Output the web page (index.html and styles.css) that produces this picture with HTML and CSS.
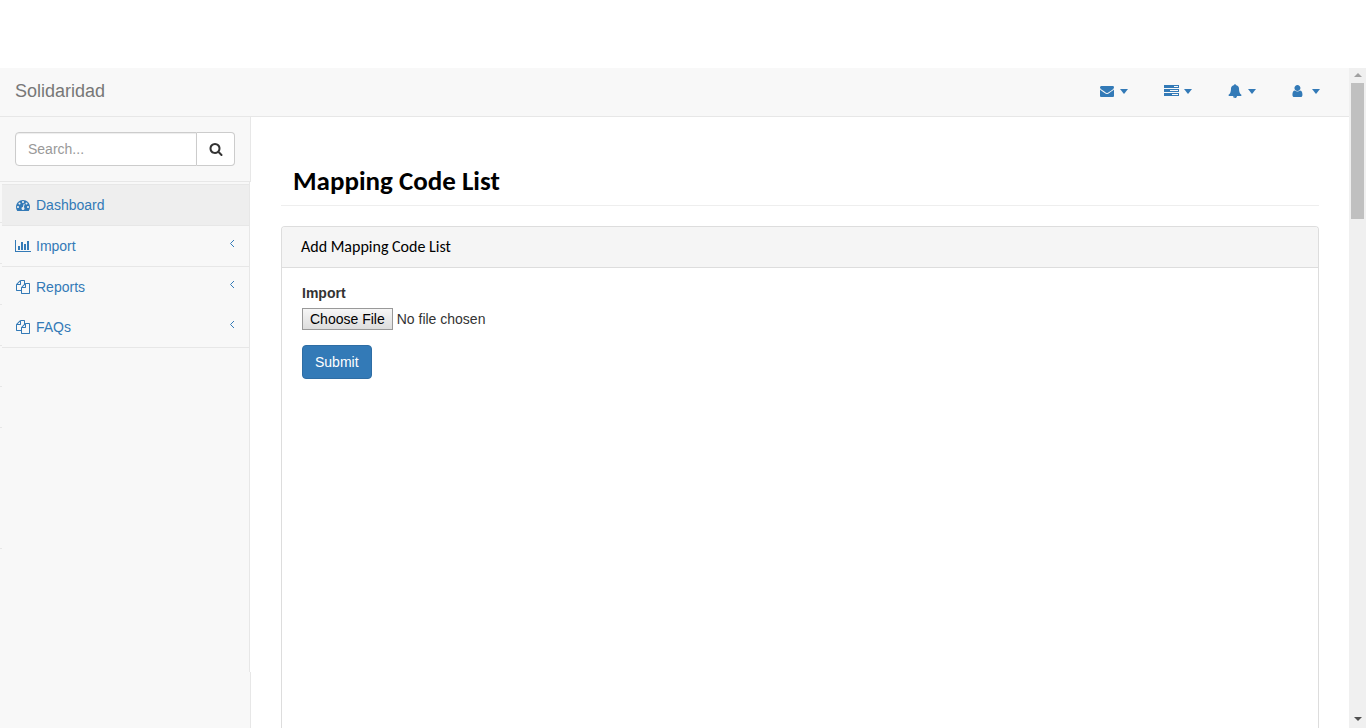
FILE: index.html
```html
<!DOCTYPE html>
<html lang="en">
<head>
<meta charset="utf-8">
<meta name="viewport" content="width=device-width, initial-scale=1">
<title>Solidaridad</title>
<link rel="stylesheet" href="styles.css">
</head>
<body>
<div class="frame">
  <div class="app">
    <header class="navbar">
      <a class="brand" href="#">Solidaridad</a>
      <nav class="top-links" aria-label="Account">
        <a href="#" aria-label="Messages"><svg class="icon" viewBox="0 0 1792 1792"><path d="M1792 710v794q0 66-47 113t-113 47h-1472q-66 0-113-47t-47-113v-794q44 49 101 87 362 246 497 345 57 42 92.500 65.500t94.500 48 110 24.500h2q51 0 110-24.500t94.500-48 92.500-65.500q170-123 498-345 57-39 100-87zm0-294q0 79-49 151t-122 123q-376 261-468 325-10 7-42.500 31t-54 38.500-52 32.500-57.500 27-50 9h-2q-23 0-50-9t-57.500-27-52-32.500-54-38.500-42.500-31q-91-64-262-182.500t-205-142.500q-62-42-117-115.500t-55-136.500q0-78 41.500-130t118.500-52h1472q65 0 112.500 47t47.500 113z"/></svg><span class="caret"></span></a>
        <a href="#" aria-label="Tasks"><svg class="icon icon-wide" viewBox="0 0 15 14"><path fill-rule="evenodd" d="M0 1h15v3H0zM10 2v1h4V2zM0 5h15v3H0zM6 6v1h8V6zM0 9h15v3H0zM8 10v1h6v-1z"/></svg><span class="caret"></span></a>
        <a href="#" aria-label="Alerts"><svg class="icon" viewBox="0 0 1792 1792"><path d="M912 1696q0-16-16-16-59 0-101.500-42.500t-42.500-101.500q0-16-16-16t-16 16q0 73 51.500 124.500t124.500 51.500q16 0 16-16zm816-288q0 52-38 90t-90 38h-448q0 106-75 181t-181 75-181-75-75-181h-448q-52 0-90-38t-38-90q50-42 91-88t85-119.500 74.500-158.500 50-206 19.500-260q0-152 117-282.500t307-158.500q-8-19-8-39 0-40 28-68t68-28 68 28 28 68q0 20-8 39 190 28 307 158.500t117 282.500q0 139 19.500 260t50 206 74.500 158.500 85 119.500 91 88z"/></svg><span class="caret"></span></a>
        <a href="#" aria-label="User"><svg class="icon" viewBox="200 0 1792 1792"><path d="M1536 1399q0 109-62.500 187t-150.500 78h-854q-88 0-150.500-78t-62.500-187q0-85 8.500-160.500t31.500-152 58.500-131 94-89 134.500-34.500q131 128 313 128t313-128q76 0 134.500 34.500t94 89 58.500 131 31.500 152 8.500 160.500zm-256-887q0 159-112.500 271.500t-271.500 112.500-271.500-112.500-112.500-271.500 112.500-271.500 271.500-112.500 271.500 112.500 112.500 271.500z"/></svg><span class="caret"></span></a>
      </nav>
    </header>
    <div class="columns">
      <aside class="sidebar">
        <form class="search" role="search">
          <input type="text" placeholder="Search..." aria-label="Search">
          <button type="button" aria-label="Search"><svg class="icon" viewBox="0 0 1792 1792"><path d="M1216 832q0-185-131.500-316.500t-316.500-131.500-316.500 131.500-131.500 316.500 131.500 316.500 316.500 131.500 316.500-131.500 131.500-316.500zm512 832q0 52-38 90t-90 38q-54 0-90-38l-343-342q-179 124-399 124-143 0-273.500-55.500t-225-150-150-225-55.500-273.500 55.500-273.500 150-225 225-150 273.500-55.500 273.500 55.500 225 150 150 225 55.500 273.500q0 220-124 399l343 343q37 37 37 90z"/></svg></button>
        </form>
        <nav class="menu" aria-label="Main">
          <a class="active" href="#"><svg class="icon menu-icon" viewBox="0 0 1792 1792"><path d="M384 1152q0-53-37.500-90.500t-90.500-37.500-90.500 37.500-37.500 90.500 37.500 90.500 90.500 37.500 90.500-37.500 37.500-90.500zm192-448q0-53-37.500-90.500t-90.500-37.500-90.500 37.500-37.500 90.500 37.500 90.500 90.500 37.500 90.500-37.500 37.500-90.500zm428 481l101-382q6-26-7.500-48.500t-38.500-29.500-48 6.500-30 39.500l-101 382q-60 5-107 43.500t-63 98.500q-20 77 20 146t117 89 146-20 89-117q16-60-6-117t-72-91zm660-33q0-53-37.500-90.500t-90.500-37.500-90.500 37.500-37.500 90.500 37.500 90.500 90.500 37.500 90.500-37.500 37.500-90.500zm-640-640q0-53-37.500-90.500t-90.500-37.500-90.500 37.500-37.500 90.500 37.500 90.500 90.500 37.500 90.500-37.500 37.500-90.500zm448 192q0-53-37.500-90.500t-90.500-37.500-90.500 37.500-37.500 90.500 37.500 90.500 90.500 37.500 90.500-37.500 37.500-90.500zm320 448q0 261-141 483-19 29-54 29h-1402q-35 0-54-29-141-221-141-483 0-182 71-348t191-286 286-191 348-71 348 71 286 191 191 286 71 348z"/></svg><span>Dashboard</span></a>
          <a href="#"><svg class="icon menu-icon icon-chart" viewBox="0 0 16 14"><path d="M0 1h1v11h15v1H0zM3 7h2v4H3zM6 3h2v8H6zM9 5h2v6H9zM12 2h2v9h-2z"/></svg><span>Import</span><svg class="angle" viewBox="0 0 6 9"><path d="M5 1L1.500 4.500L5 8"/></svg></a>
          <a class="joined" href="#"><svg class="icon menu-icon" viewBox="0 0 1792 1792"><path d="M1696 384q40 0 68 28t28 68v1216q0 40-28 68t-68 28h-960q-40 0-68-28t-28-68v-288h-544q-40 0-68-28t-28-68v-672q0-40 20-88t48-76l408-408q28-28 76-48t88-20h416q40 0 68 28t28 68v328q68-40 128-40h416zm-544 213l-299 299h299v-299zm-640-384l-299 299h299v-299zm196 647l316-316v-416h-384v416q0 40-28 68t-68 28h-416v640h512v-256q0-40 20-88t48-76zm956 804v-1152h-384v416q0 40-28 68t-68 28h-416v640h896z"/></svg><span>Reports</span><svg class="angle" viewBox="0 0 6 9"><path d="M5 1L1.500 4.500L5 8"/></svg></a>
          <a href="#"><svg class="icon menu-icon" viewBox="0 0 1792 1792"><path d="M1696 384q40 0 68 28t28 68v1216q0 40-28 68t-68 28h-960q-40 0-68-28t-28-68v-288h-544q-40 0-68-28t-28-68v-672q0-40 20-88t48-76l408-408q28-28 76-48t88-20h416q40 0 68 28t28 68v328q68-40 128-40h416zm-544 213l-299 299h299v-299zm-640-384l-299 299h299v-299zm196 647l316-316v-416h-384v416q0 40-28 68t-68 28h-416v640h512v-256q0-40 20-88t48-76zm956 804v-1152h-384v416q0 40-28 68t-68 28h-416v640h896z"/></svg><span>FAQs</span><svg class="angle" viewBox="0 0 6 9"><path d="M5 1L1.500 4.500L5 8"/></svg></a>
        </nav>
        <div class="sidebar-rest"></div>
      </aside>
      <main class="content">
        <h1>Mapping Code List</h1>
        <section class="panel">
          <h2>Add Mapping Code List</h2>
          <form class="panel-body">
            <label for="import-file">Import</label>
            <input id="import-file" type="file">
            <button class="submit" type="button">Submit</button>
          </form>
        </section>
      </main>
    </div>
  </div>
  <div class="scrollbar" aria-hidden="true">
    <span class="arrow arrow-up"></span>
    <span class="thumb"></span>
    <span class="arrow arrow-down"></span>
  </div>
</div>
</body>
</html>
```
FILE: styles.css
```css
* { box-sizing: border-box; }

body {
  margin: 0;
  background: #fff;
  color: #333;
  font: 14px/20px "Liberation Sans", Arial, sans-serif;
}

a { color: #337ab7; text-decoration: none; }

.frame {
  display: flex;
  height: 100vh;
  padding: 68px 6px 0 0;
  overflow: hidden;
}

.app {
  flex: 1;
  display: flex;
  flex-direction: column;
  min-width: 0;
}

.navbar {
  display: flex;
  justify-content: space-between;
  align-items: center;
  padding: 13px 29px 13px 15px;
  background: #f8f8f8;
  border-bottom: 1px solid #e7e7e7;
}

.brand { color: #777; font-size: 18px; padding-bottom: 2px; }

.top-links { display: flex; gap: 36px; padding-bottom: 2px; }

.top-links a {
  display: flex;
  align-items: center;
  justify-content: space-between;
  width: 28px;
}

.icon { display: block; width: 14px; height: 14px; fill: currentColor; }
.icon-wide { width: 15px; }

.caret {
  border: 4px solid transparent;
  border-top: 5px solid currentColor;
  border-bottom: 0;
}

.columns { flex: 1; display: flex; min-height: 0; }

.sidebar {
  flex: none;
  display: flex;
  flex-direction: column;
  width: 251px;
}

.search {
  display: flex;
  padding: 15px;
  background: #f8f8f8;
  border-right: 1px solid #e7e7e7;
  border-bottom: 1px solid #e7e7e7;
}

.search input {
  flex: 1;
  min-width: 0;
  height: 34px;
  padding: 6px 12px;
  border: 1px solid #ccc;
  border-radius: 4px 0 0 4px;
  box-shadow: inset 0 1px 1px rgba(0, 0, 0, .075);
  font: inherit;
}

.search input::placeholder { color: #999; }

.search button {
  width: 38px;
  padding: 0 12px;
  border: 1px solid #ccc;
  border-left: 0;
  border-radius: 0 4px 4px 0;
  background: #fff;
  color: #333;
}

/* Faint rules show in the 2px gutter left of the menu. */
.menu {
  min-height: 490px;
  margin-right: 1px;
  padding: 2px 0 0 2px;
  border-right: 1px solid #e7e7e7;
  background:
    linear-gradient(#e7e7e7, #e7e7e7) 0 366px / 2px 1px no-repeat,
    repeating-linear-gradient(transparent 0 40px, #e7e7e7 40px 41px) 0 0 / 2px 246px no-repeat,
    #f8f8f8;
}

.menu a {
  display: flex;
  align-items: center;
  gap: 6px;
  padding: 10px 14px;
  border-bottom: 1px solid #e7e7e7;
  background: #f8f8f8;
}

.menu a.active { background: #eee; border-top: 1px solid #e7e7e7; }
.menu a.joined { border-bottom: 0; }

.menu-icon { flex: none; }
.icon-chart { width: 16px; margin: 0 -1px; }

.angle {
  width: 6px;
  height: 9px;
  margin: 0 0 5px auto;
  fill: none;
  stroke: currentColor;
}

.sidebar-rest {
  flex: 1;
  background: #f8f8f8;
  border-right: 1px solid #e7e7e7;
}

.content {
  flex: 1;
  display: flex;
  flex-direction: column;
  min-width: 0;
  padding: 48px 30px 0;
}

h1 {
  margin: 0 0 20px;
  padding: 0 12px 8px;
  border-bottom: 1px solid #eee;
  color: #000;
  font: bold 27px/32px Calibri, Carlito, Lato, sans-serif;
}

.panel {
  flex: 1;
  border: 1px solid #ddd;
  border-bottom: 0;
  border-radius: 4px 4px 0 0;
}

h2 {
  margin: 0;
  padding: 10px 19px;
  border-bottom: 1px solid #ddd;
  border-radius: 3px 3px 0 0;
  background: #f5f5f5;
  color: #000;
  font: 16px/20px Calibri, Carlito, Lato, sans-serif;
}

.panel-body {
  display: flex;
  flex-direction: column;
  align-items: flex-start;
  padding: 15px 20px;
}

label { margin-bottom: 5px; font-weight: bold; }

input[type="file"] { margin-bottom: 15px; font: inherit; }

input[type="file"]::file-selector-button {
  height: 22px;
  padding: 0 7px;
  border: 1px solid #999;
  border-radius: 0;
  background: linear-gradient(#f6f6f6, #ddd);
  color: #000;
  font: inherit;
}

.submit {
  padding: 6px 12px;
  border: 1px solid #2e6da4;
  border-radius: 4px;
  background: #337ab7;
  color: #fff;
  font: inherit;
}

.scrollbar {
  flex: none;
  display: flex;
  flex-direction: column;
  align-items: center;
  width: 17px;
  padding: 5px 0;
  background: #f0f0f0;
}

.arrow { border: 4px solid transparent; }
.arrow-up { border-top: 0; border-bottom-color: #a0a0a0; }
.arrow-down { border-bottom: 0; border-top-color: #505050; margin: auto 0 2px; }
.thumb { width: 13px; height: 136px; margin-top: 6px; background: #c0c0c0; }
```
